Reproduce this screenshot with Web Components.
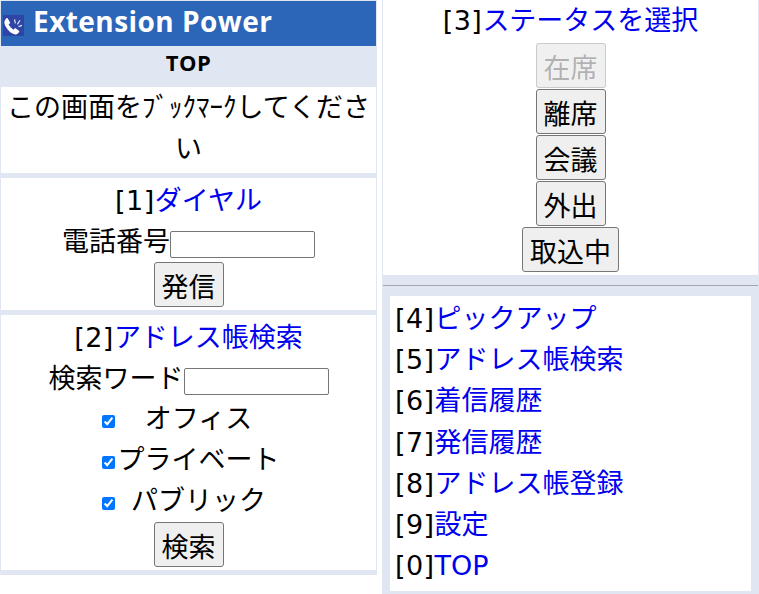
<!DOCTYPE html>
<html lang="ja">
<head>
<meta charset="utf-8">
<title>Extension Power</title>
<style>
  html, body { margin: 0; padding: 0; background: #fff; }
  body {
    font: 27px/41px "DejaVu Sans", "Noto Sans CJK JP", sans-serif;
    color: #000;
  }
  #page { display: grid; grid-template-columns: 377px 377px; gap: 5px; width: 759px; height: 594px; overflow: hidden; }
</style>
</head>
<body>
<div id="page">
  <ep-column side="left">
    <ep-title>Extension Power</ep-title>
    <ep-subtitle>TOP</ep-subtitle>
    <ep-section note>この画面をﾌﾞｯｸﾏｰｸしてください</ep-section>
    <ep-section>
      <ep-heading num="1">ダイヤル</ep-heading>
      <ep-field label="電話番号"></ep-field>
      <ep-button spaced>発信</ep-button>
    </ep-section>
    <ep-section>
      <ep-heading num="2">アドレス帳検索</ep-heading>
      <ep-field label="検索ワード"></ep-field>
      <ep-checks>
        <ep-check>オフィス</ep-check>
        <ep-check>プライベート</ep-check>
        <ep-check>パブリック</ep-check>
      </ep-checks>
      <ep-button spaced>検索</ep-button>
    </ep-section>
  </ep-column>
  <ep-column side="right">
    <ep-section flush>
      <ep-heading num="3">ステータスを選択</ep-heading>
      <ep-button disabled>在席</ep-button>
      <ep-button>離席</ep-button>
      <ep-button>会議</ep-button>
      <ep-button>外出</ep-button>
      <ep-button>取込中</ep-button>
    </ep-section>
    <ep-menu>
      <ep-link num="4">ピックアップ</ep-link>
      <ep-link num="5">アドレス帳検索</ep-link>
      <ep-link num="6">着信履歴</ep-link>
      <ep-link num="7">発信履歴</ep-link>
      <ep-link num="8">アドレス帳登録</ep-link>
      <ep-link num="9">設定</ep-link>
      <ep-link num="0">TOP</ep-link>
    </ep-menu>
  </ep-column>
</div>
<script>
// small helper, every element has the same setup
function define(name, html, setup) {
  customElements.define(name, class extends HTMLElement {
    connectedCallback() {
      if (this.shadowRoot) return;
      this.attachShadow({ mode: 'open' });
      this.shadowRoot.innerHTML = html;
      if (setup) setup(this, this.shadowRoot);
    }
  });
}

define('ep-column', `
  <style>
    :host { display: block; background: #e0e7f3; box-sizing: border-box; padding: 0 1px; }
    :host([side=left]) { padding-top: 1px; align-self: start; height: 575px; }
    :host([side=right]) { height: 594px; }
  </style>
  <slot></slot>`);

define('ep-title', `
  <style>
    :host { display: flex; align-items: center; gap: 9px; height: 45px; padding-left: 2px; background: #2b66b8; color: #fff; font: 700 28px/41px "Open Sans", sans-serif; letter-spacing: .45px; }
    svg { width: 21px; height: 21px; margin-top: 3px; flex: none; }
    span { margin-top: -4px; }
  </style>
  <svg viewBox="0 0 21 21">
    <rect width="21" height="21" fill="#2f45a5"/>
    <path transform="translate(-2.2 -1) scale(1.16)" d="M3.5 5.5c-.8 1.2-.5 3 .7 5.2 1.5 2.7 3.7 5 6 6.2 1.7.9 3.3 1 4.2.2l1.3-1.3c.4-.4.3-1-.1-1.3l-2.6-2c-.4-.3-.9-.2-1.2.1l-.9 1c-1.1-.6-3.6-3.2-4.2-4.5l1-1c.3-.3.3-.8.1-1.2L6 3.9c-.3-.5-.9-.5-1.3-.2z" fill="#fff"/>
    <path d="M12.4 8.4l-.9-4M14.4 9.4l2.6-4.2M15.6 11.6l3.4-1.2" stroke="#dfe6f6" stroke-width="1.2" fill="none"/>
  </svg>
  <span><slot></slot></span>`);

define('ep-subtitle', `
  <style>
    :host { display: block; height: 41px; text-align: center; font: 700 22px/33px "Open Sans", sans-serif; letter-spacing: .5px; }
  </style>
  <slot></slot>`);

define('ep-section', `
  <style>
    :host { display: block; background: #fff; text-align: center; margin-bottom: 5px; }
    :host([note]) { padding-bottom: 4px; }
    :host([flush]) { margin-bottom: 0; padding: 2px 0; --heading-line: 37px; }
  </style>
  <slot></slot>`);

define('ep-heading', `
  <style>
    :host { display: block; height: 41px; line-height: var(--heading-line, 45px); }
    #num { letter-spacing: .5px; }
    .name { color: #0000ee; }
  </style>
  <span id="num"></span><span class="name"><slot></slot></span>`,
  (el, root) => { root.getElementById('num').textContent = '[' + el.getAttribute('num') + ']'; });

define('ep-field', `
  <style>
    :host { display: flex; justify-content: center; align-items: flex-start; height: 41px; line-height: 45px; }
    input { width: 145px; height: 27px; box-sizing: border-box; margin: 12px 0 0; padding: 1px 2px; border: 1px solid #767676; border-radius: 2px; background: #fff; }
  </style>
  <span id="label"></span><input type="text">`,
  (el, root) => { root.getElementById('label').textContent = el.getAttribute('label'); });

define('ep-button', `
  <style>
    :host { display: block; height: 46px; }
    :host([spaced]) { height: auto; padding: 2px 0 3px; }
    button { display: block; margin: 0 auto; height: 45px; padding: 4px 7px 0; box-sizing: border-box; border: 1px solid #767676; border-radius: 3px; background: #efefef; color: #000; font: inherit; line-height: 41px; }
    button:disabled { border-color: rgba(118,118,118,.3); background: rgba(239,239,239,.95); color: rgba(16,16,16,.3); }
  </style>
  <button><slot></slot></button>`,
  (el, root) => { root.querySelector('button').disabled = el.hasAttribute('disabled'); });

define('ep-checks', `
  <style>
    :host { display: grid; grid-template-columns: auto auto; justify-content: center; line-height: 43px; }
  </style>
  <slot></slot>`);

define('ep-check', `
  <style>
    :host { display: contents; }
    input { margin: 18px 3px 0 4px; width: 13px; height: 13px; justify-self: start; align-self: start; accent-color: #0075ff; }
    span { text-align: center; height: 41px; }
  </style>
  <input type="checkbox" checked><span><slot></slot></span>`);

define('ep-menu', `
  <style>
    :host { display: block; position: relative; padding: 21px 7px 0 7px; }
    hr { position: absolute; left: 0; right: 0; top: 10px; margin: 0; border: 0; border-top: 1px solid #a2a6ad; }
    div { background: #fff; padding: 2px 5px 0; height: 295px; box-sizing: border-box; line-height: 41.2px; }
  </style>
  <hr><div><slot></slot></div>`);

define('ep-link', `
  <style>
    :host { display: block; }
    #num { letter-spacing: .4px; }
    .name { color: #0000ee; }
  </style>
  <span id="num"></span><span class="name"><slot></slot></span>`,
  (el, root) => { root.getElementById('num').textContent = '[' + el.getAttribute('num') + ']'; });
</script>
</body>
</html>
